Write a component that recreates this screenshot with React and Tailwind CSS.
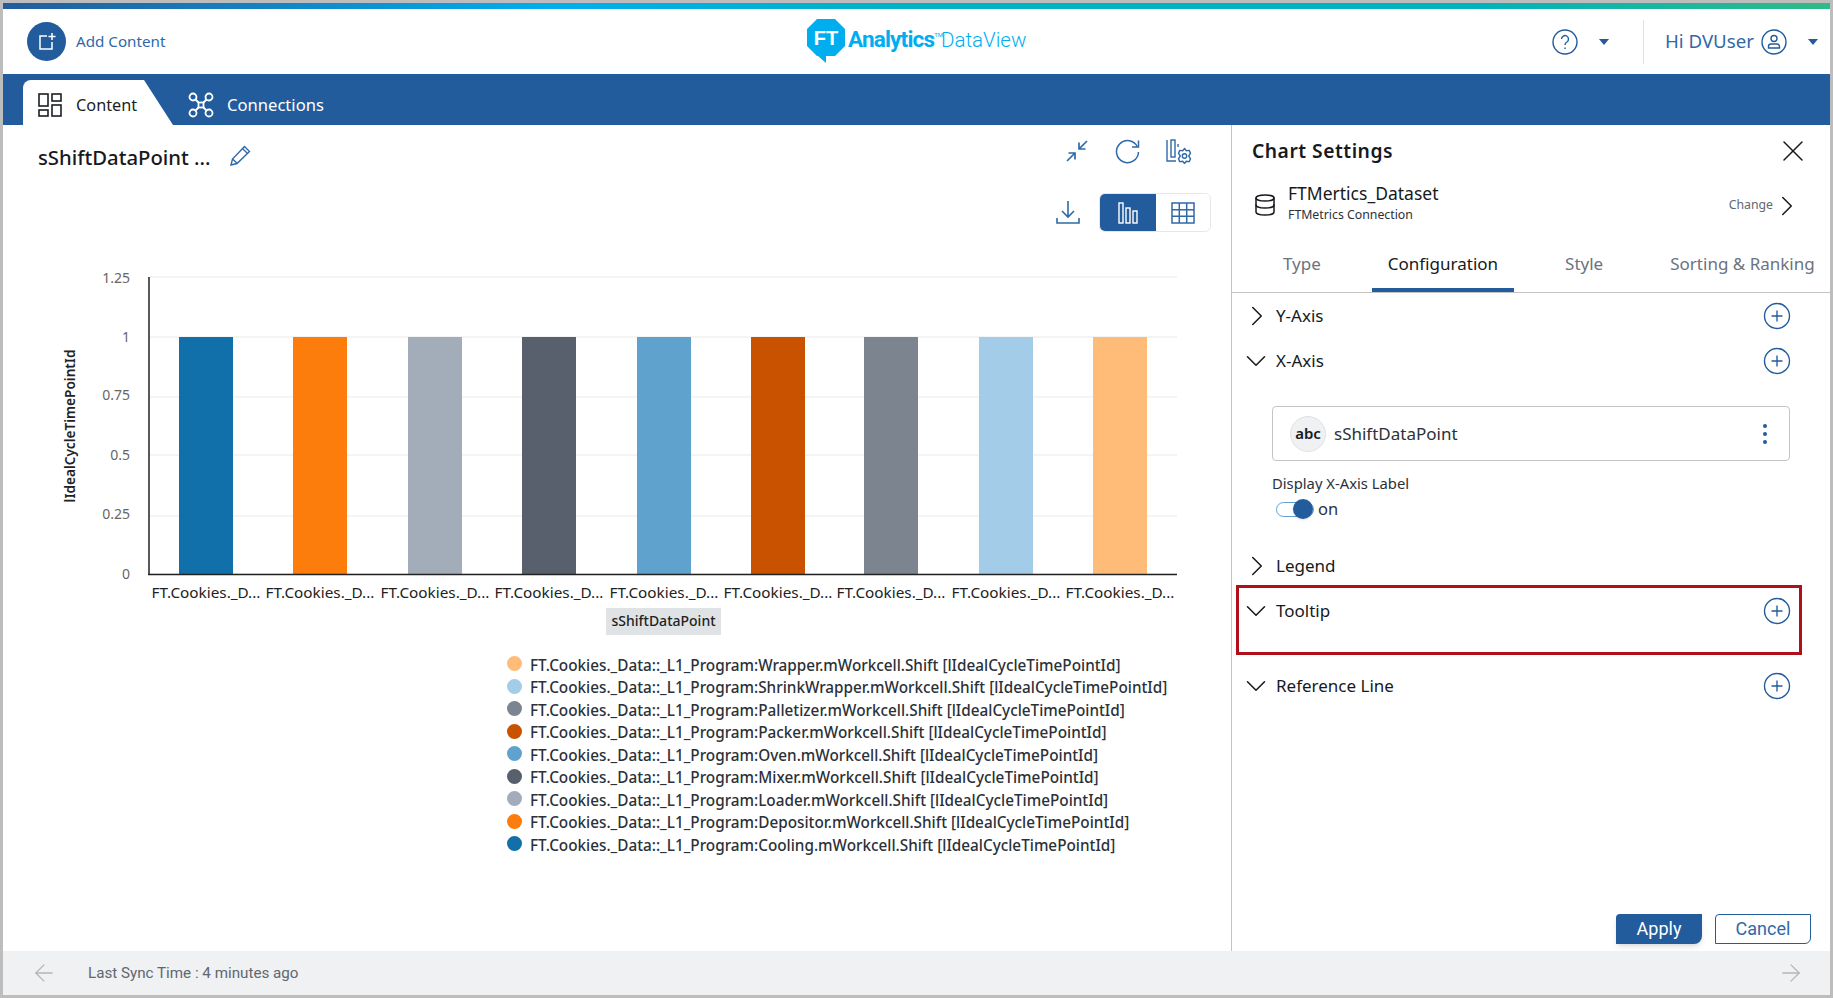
import { ArrowLeft, ArrowRight, ChevronDown, ChevronRight, CirclePlus, Database, X } from 'lucide-react';

const bars = [
  { x: 179, color: '#1170aa' },
  { x: 293, color: '#fc7d0b' },
  { x: 408, color: '#a3acb9' },
  { x: 522, color: '#57606c' },
  { x: 637, color: '#5fa2ce' },
  { x: 751, color: '#c85200' },
  { x: 864, color: '#7b848f' },
  { x: 979, color: '#a3cce9' },
  { x: 1093, color: '#ffbc79' },
];

const ticks = [
  { y: 277, labelY: 283, label: '1.25' },
  { y: 337, labelY: 342, label: '1' },
  { y: 397, labelY: 400, label: '0.75' },
  { y: 455, labelY: 460, label: '0.5' },
  { y: 516, labelY: 519, label: '0.25' },
  { y: 574, labelY: 579, label: '0' },
];

const legend = [
  { name: 'Wrapper', color: '#ffbc79' },
  { name: 'ShrinkWrapper', color: '#a3cce9' },
  { name: 'Palletizer', color: '#7b848f' },
  { name: 'Packer', color: '#c85200' },
  { name: 'Oven', color: '#5fa2ce' },
  { name: 'Mixer', color: '#57606c' },
  { name: 'Loader', color: '#a3acb9' },
  { name: 'Depositor', color: '#fc7d0b' },
  { name: 'Cooling', color: '#1170aa' },
];

function Logo() {
  return (
    <div className="flex items-start">
      <svg width="38" height="45" viewBox="0 0 38 45">
        <path d="M10 0H28L38 10V27L28 37H19V44L11 37H10L0 27V10Z" fill="#00aeef" />
        <text x="19" y="26" textAnchor="middle" fontFamily="Liberation Sans" fontWeight="700" fontSize="20" fill="#fff">FT</text>
      </svg>
      <div className="flex items-baseline ml-[3px] mt-[4px] text-[#00aeef] font-['Roboto',sans-serif]">
        <span className="text-[22.500px] font-bold tracking-[-0.800px]">Analytics</span>
        <span className="text-[6px] self-start mt-[7px] -mr-[2px]">TM</span>
        <span className="text-[20.500px] font-light">DataView</span>
      </div>
    </div>
  );
}

function Caret() {
  return <span className="w-0 h-0 border-x-[5px] border-x-transparent border-t-[6px] border-t-[#225c9c]" />;
}

function Header() {
  return (
    <div className="h-[65px] bg-white flex items-center relative shrink-0">
      <div className="w-[39px] h-[39px] rounded-full bg-[#225c9c] ml-[24px] flex items-center justify-center">
        <svg width="20" height="20" viewBox="0 0 20 20" fill="none" stroke="#fff" strokeWidth="1.5">
          <path d="M10 4H3V17H15V10" />
          <path d="M15 1V8M11.5 4.5H18.5" />
        </svg>
      </div>
      <span className="ml-[10px] text-[15.200px] text-[#2f69a8]">Add Content</span>
      <div className="flex-1 flex justify-center pl-[116px] self-start pt-[10px]">
        <Logo />
      </div>
      <svg width="26" height="26" viewBox="0 0 26 26" fill="none" stroke="#225c9c" strokeWidth="1.4">
        <circle cx="13" cy="13" r="12" />
        <path d="M9.5 10a3.5 3.5 0 1 1 5.4 3c-1.300.800-1.900 1.500-1.900 3" />
        <path d="M13 18.500v1.500" />
      </svg>
      <div className="ml-[21px] mr-[34px] flex"><Caret /></div>
      <div className="w-px h-[44px] bg-[#dcdfe3]" />
      <span className="ml-[21px] text-[18.700px] text-[#2f69a8]">Hi DVUser</span>
      <svg className="ml-[7px]" width="26" height="26" viewBox="0 0 26 26" fill="none" stroke="#225c9c" strokeWidth="1.4">
        <circle cx="13" cy="13" r="12" />
        <circle cx="13" cy="9.500" r="3" />
        <path d="M7.500 19v-1.500c0-1.500 1-2.500 2.500-2.500h6c1.500 0 2.500 1 2.500 2.500V19Z" />
      </svg>
      <div className="ml-[21px] mr-[12px] flex"><Caret /></div>
    </div>
  );
}

function Nav() {
  return (
    <div className="h-[51px] bg-[#225c9c] flex items-end shrink-0 pl-[20px]">
      <div className="w-[150px] h-[45px] bg-white rounded-tl-[8px] [clip-path:polygon(0_0,121px_0,150px_100%,0_100%)] flex items-center pl-[15px] pt-[5px] text-[16.300px] text-[#1b1f24]">
        <svg width="24" height="24" viewBox="0 0 24 24" fill="none" stroke="#1b1f24" strokeWidth="1.6">
          <rect x="1" y="1" width="9" height="12" />
          <rect x="14" y="1" width="9" height="7" />
          <rect x="1" y="17" width="9" height="6" />
          <rect x="14" y="12" width="9" height="11" />
        </svg>
        <span className="ml-[14px]">Content</span>
      </div>
      <div className="h-[45px] flex items-center ml-[15px] pt-[5px] text-[16.600px] text-white">
        <svg width="26" height="26" viewBox="0 0 26 26" fill="none" stroke="#fff" strokeWidth="1.8">
          <circle cx="5" cy="5" r="3.500" />
          <circle cx="21" cy="5" r="3.500" />
          <circle cx="5" cy="21" r="3.500" />
          <circle cx="21" cy="21" r="3.500" />
          <rect x="10.500" y="10.500" width="5" height="5" />
          <path d="M7.500 7.500L10.500 10.500M18.500 7.500L15.500 10.500M7.500 18.500L10.500 15.500M18.500 18.500L15.500 15.500" />
        </svg>
        <span className="ml-[13px]">Connections</span>
      </div>
    </div>
  );
}

function Chart() {
  return (
    <svg className="mt-[30px] shrink-0" width="1228" height="378" viewBox="3 262 1228 378">
      {ticks.map((t) => (
        <g key={t.label}>
          <line x1="149" x2="1177" y1={t.y} y2={t.y} stroke="#f0f0f0" strokeWidth="1.500" />
          <text x="130" y={t.labelY} textAnchor="end" fontSize="14" fill="#666" fontFamily="Noto Sans">{t.label}</text>
        </g>
      ))}
      {bars.map((b) => (
        <g key={b.x}>
          <rect x={b.x} y="337" width="54" height="237" fill={b.color} />
          <text x={b.x + 27} y="598" textAnchor="middle" fontSize="15.300" fill="#222" fontFamily="Noto Sans">FT.Cookies._D...</text>
        </g>
      ))}
      <line x1="149" x2="149" y1="277" y2="575" stroke="#222" strokeWidth="1.500" />
      <line x1="148" x2="1177" y1="574.500" y2="574.500" stroke="#222" strokeWidth="1.500" />
      <text transform="translate(75 426) rotate(-90)" textAnchor="middle" fontSize="13.600" fontWeight="600" fill="#222" fontFamily="Noto Sans">lIdealCycleTimePointId</text>
      <rect x="606" y="608" width="115" height="27" fill="#dfe3e6" />
      <text x="663.500" y="626" textAnchor="middle" fontSize="14" fontWeight="500" fill="#222" fontFamily="Noto Sans">sShiftDataPoint</text>
    </svg>
  );
}

function ChartPane() {
  return (
    <div className="flex-1 flex flex-col min-w-0">
      <div className="h-[68px] flex items-start justify-between pt-[14px] pl-[35px] pr-[39px] shrink-0">
        <div className="flex items-center mt-[4px] h-[28px]">
          <span className="text-[20.300px] font-medium text-[#16191d]">sShiftDataPoint ...</span>
          <svg className="ml-[18px] -mt-[3px]" width="23" height="23" viewBox="0 0 23 23" fill="none" stroke="#2f69a8" strokeWidth="1.400">
            <path d="M2 21l1.500-6L15.500 2.500l5 5L8 19.500Z" />
            <path d="M3.500 15l5 4.500M13.500 4.500l5 5" />
          </svg>
        </div>
        <div className="flex items-center gap-[27px] h-[24px]">
          <svg width="22" height="22" viewBox="0 0 22 22" fill="none" stroke="#2f69a8" strokeWidth="1.700">
            <path d="M13 9L21 1M13 2.500V9H19.500" />
            <path d="M9 13L1 21M2.500 13H9V19.500" />
          </svg>
          <svg width="25" height="25" viewBox="0 0 25 25" fill="none" stroke="#2f69a8" strokeWidth="1.500">
            <path d="M22.500 8A11 11 0 1 0 23.500 13" />
            <path d="M17 8H23.500V1.500" />
          </svg>
          <svg className="-ml-[1px]" width="26" height="25" viewBox="0 0 26 25" fill="none" stroke="#2f69a8" strokeWidth="1.400">
            <path d="M1 1V22H10" />
            <rect x="5" y="1" width="4" height="17" />
            <path d="M12 5V8" />
            <circle cx="18.500" cy="17" r="2.200" />
            <path d="M18.500 9.500l1.800 2.200 3-.300 1.200 2.800-1.800 2.800 1.800 2.800-1.200 2.800-3-.300-1.800 2.200-1.800-2.200-3 .300-1.200-2.800 1.800-2.800-1.800-2.800 1.200-2.800 3 .300Z" />
          </svg>
        </div>
      </div>
      <div className="h-[39px] flex items-center justify-end pr-[20px] shrink-0">
        <svg className="-mt-[1px]" width="24" height="24" viewBox="0 0 24 24" fill="none" stroke="#2f69a8" strokeWidth="1.600">
          <path d="M12 1V17M6 11L12 17L18 11" />
          <path d="M1 18V23H23V18" />
        </svg>
        <div className="ml-[19px] w-[112px] h-[39px] flex rounded-[6px] border border-[#e5e7eb] overflow-hidden">
          <div className="w-[56px] bg-[#225c9c] flex items-center justify-center">
            <svg width="20" height="22" viewBox="0 0 20 22" fill="none" stroke="#fff" strokeWidth="1.400">
              <rect x="1" y="1" width="4" height="20" />
              <rect x="8" y="6" width="4" height="15" />
              <rect x="15" y="9" width="4" height="12" />
            </svg>
          </div>
          <div className="flex-1 bg-white flex items-center justify-center">
            <svg width="24" height="22" viewBox="0 0 24 22" fill="none" stroke="#2f69a8" strokeWidth="1.500">
              <rect x="1" y="1" width="22" height="20" />
              <path d="M8.300 1V21M15.700 1V21M1 7.700H23M1 14.300H23" />
            </svg>
          </div>
        </div>
      </div>
      <Chart />
      <div className="ml-[504px] mt-[14px] flex flex-col text-[15.300px] font-medium text-[#2b3138]">
        {legend.map((l) => (
          <div key={l.name} className="h-[22.500px] flex items-center">
            <span className="w-[15px] h-[15px] rounded-full mb-[3px]" style={{ backgroundColor: l.color }} />
            <span className="ml-[8px] whitespace-nowrap">FT.Cookies._Data::_L1_Program:{l.name}.mWorkcell.Shift [lIdealCycleTimePointId]</span>
          </div>
        ))}
      </div>
    </div>
  );
}

function SectionRow({ label, open, add = true, height = 'h-[45px]' }) {
  return (
    <div className={`${height} flex items-center`}>
      <span className="w-[29px] h-[24px] flex items-center shrink-0">
        {open ? (
          <ChevronDown size={34} strokeWidth={1.100} className="-ml-[8px] shrink-0 text-[#16191d]" />
        ) : (
          <ChevronRight size={34} strokeWidth={1.100} className="-ml-[7px] shrink-0 text-[#16191d]" />
        )}
      </span>
      <span className="text-[17px] text-[#16191d] flex-1">{label}</span>
      {add && <CirclePlus size={30} strokeWidth={1.100} className="text-[#225c9c] -mr-[2px]" />}
    </div>
  );
}

function SettingsPane() {
  const tabs = ['Type', 'Configuration', 'Style', 'Sorting & Ranking'];
  return (
    <div className="w-[599px] border-l border-[#c4c4c4] flex flex-col shrink-0">
      <div className="h-[52px] flex items-center justify-between pl-[20px] pr-[19px]">
        <span className="text-[19.300px] font-semibold tracking-[0.500px] text-[#16191d]">Chart Settings</span>
        <X size={36} strokeWidth={1} className="text-[#16191d]" />
      </div>
      <div className="h-[48px] flex items-center pl-[21px] pr-[31px] mt-[1px]">
        <Database size={24} strokeWidth={1.500} className="text-[#16191d] mt-[6px]" />
        <div className="ml-[11px] flex-1">
          <div className="text-[17.500px] leading-[25px] text-[#16191d]">FTMertics_Dataset</div>
          <div className="text-[12.300px] leading-[18px] text-[#2b3138]">FTMetrics Connection</div>
        </div>
        <span className="text-[12.300px] text-[#5f6771] mr-[2px] mt-[7px]">Change</span>
        <span className="w-[24px] h-[24px] flex items-center mt-[7px]">
          <ChevronRight size={34} strokeWidth={1.100} className="shrink-0 -ml-[5px] text-[#16191d]" />
        </span>
      </div>
      <div className="h-[52px] mt-[15px] flex gap-[35px] pl-[35px] border-b border-[#c4c4c4] shrink-0">
        {tabs.map((t) => (
          <div
            key={t}
            className={t === 'Configuration'
              ? 'px-4 pb-[2px] flex items-center whitespace-nowrap text-[17px] text-[#16191d] border-b-4 border-[#225c9c]'
              : 'px-4 pb-[2px] flex items-center whitespace-nowrap text-[17px] text-[#6b7280] border-b-4 border-transparent'}
          >
            {t}
          </div>
        ))}
      </div>
      <div className="flex flex-col pl-[15px] pr-[40px]">
        <SectionRow label="Y-Axis" />
        <SectionRow label="X-Axis" open />
        <div className="ml-[25px] mt-[23px] h-[55px] border border-[#c4c4c4] rounded-[4px] flex items-center pl-[17px] pr-[22px]">
          <span className="w-[36px] h-[36px] rounded-full bg-[#eff1f3] border border-[#dfe3e6] flex items-center justify-center text-[15px] font-semibold text-[#16191d]">abc</span>
          <span className="ml-[8px] text-[17px] text-[#2b3138] flex-1">sShiftDataPoint</span>
          <div className="flex flex-col gap-[4px]">
            <span className="w-[4px] h-[4px] rounded-full bg-[#225c9c]" />
            <span className="w-[4px] h-[4px] rounded-full bg-[#225c9c]" />
            <span className="w-[4px] h-[4px] rounded-full bg-[#225c9c]" />
          </div>
        </div>
        <div className="ml-[25px] mt-[12px] text-[14.800px] leading-[20px] text-[#2b3138]">Display X-Axis Label</div>
        <div className="ml-[29px] mt-[6px] h-[20px] flex items-center">
          <div className="w-[38px] h-[15px] rounded-full border border-[#5fa2ce] bg-white flex items-center justify-end">
            <span className="w-[20px] h-[20px] rounded-full bg-[#225c9c] shadow-sm" />
          </div>
          <span className="ml-[4px] text-[16.500px] text-[#2b3138]">on</span>
        </div>
        <div className="mt-[27px]"><SectionRow label="Legend" open={false} add={false} height="h-[39px]" /></div>
        <div className="-ml-[11px] -mr-[12px] h-[70px] border-[3px] border-[#b0101c] pl-[8px] pr-[9px]">
          <SectionRow label="Tooltip" open />
        </div>
        <div className="mt-[8px]"><SectionRow label="Reference Line" open /></div>
      </div>
      <div className="mt-auto mb-[7px] flex justify-end gap-[13px] pr-[19px] text-[18px]">
        <button className="w-[86px] h-[30px] pb-[1px] bg-[#225c9c] text-white rounded-tl-[4px] rounded-br-[8px] shadow-md font-['Roboto',sans-serif]">Apply</button>
        <button className="w-[96px] h-[30px] pb-[1px] bg-white text-[#2f69a8] border border-[#225c9c] rounded-br-[6px] rounded-tl-[4px] font-['Roboto',sans-serif]">Cancel</button>
      </div>
    </div>
  );
}

export default function App() {
  return (
    <div className="w-[1833px] h-[998px] border-[3px] border-[#bdbdbd] flex flex-col bg-white overflow-hidden font-['Noto_Sans','Open_Sans',sans-serif]">
      <div className="h-[6px] shrink-0 bg-[linear-gradient(90deg,#235c9c_0%,#00aeef_30%,#00b2c4_50%,#00b2be_80%,#2fba85_100%)]" />
      <Header />
      <Nav />
      <div className="flex-1 flex min-h-0">
        <ChartPane />
        <SettingsPane />
      </div>
      <div className="h-[44px] bg-[#eff1f3] flex items-center pl-[27px] pr-[25px] shrink-0 font-['Roboto',sans-serif]">
        <ArrowLeft size={28} strokeWidth={1.100} className="text-[#b4b7ba]" />
        <span className="ml-[30px] pt-[1px] text-[15.200px] text-[#5f6771] flex-1">Last Sync Time : 4 minutes ago</span>
        <ArrowRight size={28} strokeWidth={1.100} className="text-[#b4b7ba]" />
      </div>
    </div>
  );
}
